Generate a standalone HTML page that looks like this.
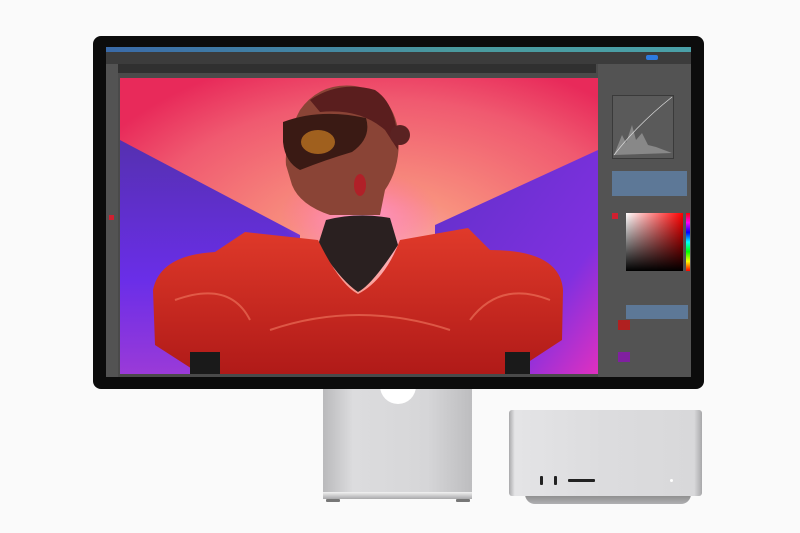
<!DOCTYPE html>
<html><head><style>
body{margin:0;width:800px;height:533px;background:#fafafa;position:relative;overflow:hidden;font-family:"Liberation Sans",sans-serif}
.a{position:absolute}
</style></head><body>
<!-- stand -->
<div class="a" style="left:323px;top:385px;width:149px;height:112px;background:linear-gradient(90deg,#b9b9bb,#dcdcde 20%,#d6d6d8 70%,#bdbdbf);"></div>
<div class="a" style="left:380px;top:380px;width:36px;height:24px;border-radius:0 0 18px 18px;background:#fff"></div>
<div class="a" style="left:323px;top:492px;width:149px;height:7px;background:linear-gradient(#f2f2f2,#a8a8aa)"></div>
<div class="a" style="left:326px;top:499px;width:14px;height:3px;background:#777;border-radius:1px"></div>
<div class="a" style="left:456px;top:499px;width:14px;height:3px;background:#777;border-radius:1px"></div>
<!-- mac studio -->
<div class="a" style="left:525px;top:494px;width:166px;height:10px;background:linear-gradient(#888,#b0b0b2);border-radius:0 0 30px 30px"></div>
<div class="a" style="left:509px;top:410px;width:193px;height:86px;background:linear-gradient(90deg,#a9a9ab,#e4e4e6 3%,#dcdcde 50%,#d8d8da 96%,#a8a8aa);border-radius:3px"></div>
<div class="a" style="left:540px;top:476px;width:3px;height:9px;background:#222;border-radius:1px"></div>
<div class="a" style="left:554px;top:476px;width:3px;height:9px;background:#222;border-radius:1px"></div>
<div class="a" style="left:568px;top:479px;width:27px;height:3px;background:#222;border-radius:1px"></div>
<div class="a" style="left:670px;top:479px;width:3px;height:3px;background:#fff;border-radius:50%"></div>
<!-- monitor bezel -->
<div class="a" style="left:93px;top:36px;width:611px;height:353px;background:#0c0c0c;border-radius:8px"></div>
<!-- screen -->
<div class="a" style="left:106px;top:47px;width:585px;height:330px;background:#4a4a4a;overflow:hidden">
 <div class="a" style="left:0;top:0;width:585px;height:5px;background:linear-gradient(90deg,#3a6aa8,#4a9a9e 60%,#4aa0a8)"></div>
 <div class="a" style="left:0;top:5px;width:585px;height:12px;background:#3c3c3c"></div>
 <div class="a" style="left:540px;top:8px;width:12px;height:5px;background:#2d7be0;border-radius:2px"></div>
 <div class="a" style="left:0;top:17px;width:490px;height:9px;background:#303030"></div>
 <div class="a" style="left:0;top:17px;width:12px;height:313px;background:#535353"></div>
 <div class="a" style="left:3px;top:168px;width:5px;height:5px;background:#d02030"></div>
 <div class="a" style="left:492px;top:17px;width:93px;height:313px;background:#535353"></div>
 <div class="a" style="left:506px;top:48px;width:60px;height:62px;background:#5a5a5a;border:1px solid #3a3a3a"></div>
 <svg class="a" style="left:506px;top:48px" width="62" height="64"><path d="M2 60 L10 40 L14 48 L20 30 L24 45 L30 38 L36 50 L44 52 L60 58 L2 60Z" fill="#888"/><path d="M2 60 Q25 30 60 2" stroke="#ddd" fill="none" stroke-width="0.7"/></svg>
 <div class="a" style="left:506px;top:124px;width:75px;height:25px;background:#5d7897"></div>
 <div class="a" style="left:520px;top:166px;width:57px;height:58px;background:linear-gradient(to top,#000,transparent),linear-gradient(90deg,#fff,#ff0000)"></div>
 <div class="a" style="left:580px;top:166px;width:4px;height:58px;background:linear-gradient(#f00,#f0f,#00f,#0ff,#0f0,#ff0,#f00)"></div>
 <div class="a" style="left:506px;top:166px;width:6px;height:6px;background:#d02030"></div>
 <div class="a" style="left:520px;top:258px;width:62px;height:14px;background:#5d7897"></div>
 <div class="a" style="left:512px;top:273px;width:12px;height:10px;background:#b02020"></div>
 <div class="a" style="left:512px;top:305px;width:12px;height:10px;background:#8020a0"></div>
 <!-- image -->
 <svg class="a" style="left:14px;top:31px" width="478" height="296" viewBox="120 78 478 296">
  <defs>
   <radialGradient id="bg" cx="0.55" cy="0.6" r="0.7"><stop offset="0" stop-color="#fbb0b8"/><stop offset="0.3" stop-color="#f8907e"/><stop offset="0.75" stop-color="#f05a70"/><stop offset="1" stop-color="#e82a5a"/></radialGradient>
   <radialGradient id="glow" cx="0.5" cy="0.5" r="0.5"><stop offset="0" stop-color="#ff9ad0" stop-opacity="0.9"/><stop offset="1" stop-color="#ff60b0" stop-opacity="0"/></radialGradient>
   <linearGradient id="pl" x1="0" y1="0" x2="0" y2="1"><stop offset="0" stop-color="#5530b0"/><stop offset="0.6" stop-color="#6a2ee8"/><stop offset="1" stop-color="#9a3ad8"/></linearGradient>
   <linearGradient id="pr" x1="0" y1="0" x2="1" y2="1"><stop offset="0" stop-color="#6030c8"/><stop offset="0.7" stop-color="#8030e0"/><stop offset="1" stop-color="#e030c0"/></linearGradient>
   <linearGradient id="red" x1="0" y1="0" x2="0" y2="1"><stop offset="0" stop-color="#e03a2a"/><stop offset="1" stop-color="#b01a18"/></linearGradient>
  </defs>
  <rect x="120" y="78" width="478" height="296" fill="url(#bg)"/>
  <polygon points="120,140 300,235 300,374 120,374" fill="url(#pl)"/>
  <polygon points="598,150 435,225 435,374 598,374" fill="url(#pr)"/>
  <ellipse cx="360" cy="215" rx="80" ry="45" fill="url(#glow)"/>
  <!-- head -->
  <path d="M300 110 Q320 82 355 86 Q392 92 398 130 Q402 165 385 190 L380 215 L330 215 Q300 205 292 185 L286 165 Q284 140 300 110Z" fill="#8a4436"/>
  <path d="M310 100 Q340 80 375 90 Q398 105 398 150 L385 130 Q360 108 320 112Z" fill="#5a1e1e"/>
  <circle cx="400" cy="135" r="10" fill="#5a2222"/>
  <path d="M283 122 Q320 108 366 118 Q372 138 352 152 Q325 160 300 170 Q285 162 283 142Z" fill="#3a1a14"/>
  <ellipse cx="318" cy="142" rx="17" ry="12" fill="#a0601e"/>
  <ellipse cx="360" cy="185" rx="6" ry="11" fill="#b02028"/>
  <!-- neck -->
  <path d="M326 220 Q358 212 390 218 L398 245 Q372 285 358 292 Q340 280 318 245Z" fill="#2a2020"/>
  <!-- jacket -->
  <path d="M245 232 L318 240 Q340 285 358 294 Q385 280 400 240 L468 228 L490 250 Q560 250 563 290 L562 340 L510 374 L200 374 L155 345 L153 290 Q160 255 215 252Z" fill="url(#red)"/>
  <path d="M175 300 Q230 280 250 320 M470 320 Q500 280 550 300 M270 330 Q358 300 450 330" stroke="#f07a60" stroke-width="2" fill="none" opacity="0.6"/>
  <rect x="190" y="352" width="30" height="22" fill="#1a1a1a"/>
  <rect x="505" y="352" width="25" height="22" fill="#1a1a1a"/>
 </svg>
</div>
</body></html>
